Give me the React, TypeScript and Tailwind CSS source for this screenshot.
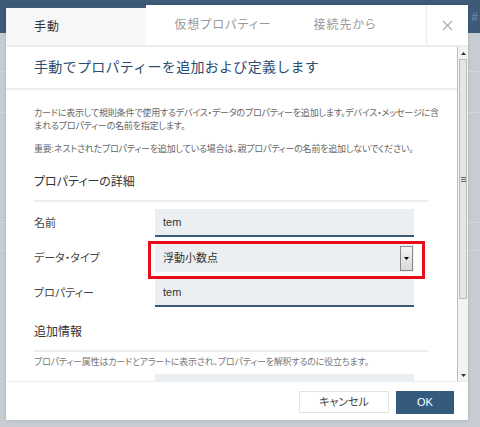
import React from 'react';

const jp = { fontFamily: '"Liberation Sans", "Noto Sans CJK JP", sans-serif' };

const Field: React.FC<{ label: string; value: string }> = ({ label, value }) => (
  <div className="flex items-center h-[28px]">
    <div className="w-[121px] text-[11px] text-[#444] [font-feature-settings:'palt']">{label}</div>
    <div className="w-[259px] h-[28px] bg-[#eceff1] border-b-2 border-[#3a5a7a] flex items-center pl-[8px] text-[11px] text-[#333]">
      {value}
    </div>
  </div>
);

const App: React.FC = () => {
  return (
    <div className="relative w-[480px] h-[427px] overflow-hidden bg-[#c6ccd1]" style={jp}>
      {/* page behind the dialog */}
      <div className="h-[33px] bg-[#3d5a78] flex justify-end items-center pr-[2px] text-[12px] text-[#7d94ab]">#</div>
      <div className="h-[39px] border-b border-[#d3d8dc]"></div>
      <div className="h-[41px] border-b border-[#d3d8dc]"></div>
      <div className="h-[110px] border-b border-[#d3d8dc]"></div>
      <div className="h-[28px] border-b border-[#d3d8dc]"></div>

      {/* dialog */}
      <div className="absolute left-[6px] top-[5px] w-[462px] h-[415px] bg-white flex flex-col shadow-[0_0_3px_rgba(0,0,0,0.15)]">
        {/* tabs */}
        <div className="h-[42px] flex border-b-2 border-[#ececec] text-[12px] [font-feature-settings:'palt']">
          <div className="w-[140px] border-t-[3px] border-[#3d5a78] bg-[#f7f7f7] flex items-center pl-[28px] text-[#333] tracking-[1px]">手動</div>
          <div className="w-[154px] flex items-center justify-center text-[#999] tracking-[1px]">仮想プロパティー</div>
          <div className="w-[90px] flex items-center justify-center text-[#999] tracking-[1px]">接続先から</div>
          <div className="flex-1"></div>
          <div className="w-[42px] border-l border-[#ececec] flex items-center justify-center">
            <svg width="11" height="11" viewBox="0 0 11 11">
              <path d="M1 1L10 10M10 1L1 10" stroke="#a7b3b3" strokeWidth="1.4" />
            </svg>
          </div>
        </div>

        {/* body */}
        <div className="h-[334px] flex">
          <div className="flex-1 overflow-hidden">
            <div className="h-[43px] border-b-2 border-[#eeeeee] flex items-center px-[28px] text-[14px] text-[#2b4d70] tracking-[0.3px]">
              手動でプロパティーを追加および定義します
            </div>
            <div className="pl-[28px] pr-[29px]">
              <div className="pt-[17px] text-[9px] leading-[13px] text-[#666] whitespace-nowrap [font-feature-settings:'palt'] tracking-[-0.2px]">
                カードに表示して規則条件で使用するデバイス・データのプロパティーを追加します。デバイス・メッセージに含
                <br />
                まれるプロパティーの名前を指定します。
              </div>
              <div className="mt-[10px] text-[9px] leading-[13px] text-[#666] whitespace-nowrap [font-feature-settings:'palt'] tracking-[-0.2px]">
                重要:ネストされたプロパティーを追加している場合は、親プロパティーの名前を追加しないでください。
              </div>
              <div className="mt-[18px] pb-[10px] border-b-2 border-[#eeeeee] text-[12px] leading-[16px] text-[#333] [font-feature-settings:'palt']">
                プロパティーの詳細
              </div>

              <div className="mt-[7px] flex flex-col gap-[7px]">
                <Field label="名前" value="tem" />
                <div className="flex items-center h-[28px]">
                  <div className="w-[121px] text-[11px] text-[#444] [font-feature-settings:'palt']">データ・タイプ</div>
                  <div className="relative w-[259px] h-[28px] bg-[#eceff1] flex items-center pl-[8px] text-[11px] text-[#333]">
                    浮動小数点
                    <div className="absolute right-[1px] top-[2px] w-[13px] h-[25px] border border-[#8a8a8a] bg-gradient-to-b from-[#f4f4f4] to-[#d9d9d9] flex items-center justify-center">
                      <svg width="5" height="3" viewBox="0 0 5 3">
                        <path d="M0 0H5L2.5 3Z" fill="#000" />
                      </svg>
                    </div>
                    <div className="absolute left-[-7px] right-[-11px] top-[-3px] bottom-[-7px] border-[3px] border-[#e60d19]"></div>
                  </div>
                </div>
                <Field label="プロパティー" value="tem" />
              </div>

              <div className="mt-[17px] pb-[10px] border-b-2 border-[#eeeeee] text-[12px] leading-[16px] text-[#333] [font-feature-settings:'palt']">
                追加情報
              </div>
              <div className="mt-[4px] text-[9px] leading-[13px] text-[#777] whitespace-nowrap [font-feature-settings:'palt'] tracking-[-0.2px]">
                プロパティー属性はカードとアラートに表示され、プロパティーを解釈するのに役立ちます。
              </div>
              <div className="mt-[5px] ml-[121px] w-[259px] h-[28px] bg-[#eceff1]"></div>
            </div>
          </div>

          {/* scrollbar */}
          <div className="w-[11px] flex flex-col bg-[#f3f3f3] border-l border-[#bdbdbd]">
            <div className="h-[12px] flex items-center justify-center">
              <svg width="5" height="3" viewBox="0 0 5 3">
                <path d="M0 3H5L2.5 0Z" fill="#333" />
              </svg>
            </div>
            <div className="h-[240px] mx-[1px] bg-[#e6e6e6] border border-[#bcbcbc] flex flex-col items-center justify-center gap-[1px]">
              <div className="w-[5px] h-px bg-[#666]"></div>
              <div className="w-[5px] h-px bg-[#666]"></div>
              <div className="w-[5px] h-px bg-[#666]"></div>
            </div>
            <div className="flex-1"></div>
            <div className="h-[12px] flex items-center justify-center">
              <svg width="5" height="3" viewBox="0 0 5 3">
                <path d="M0 0H5L2.5 3Z" fill="#333" />
              </svg>
            </div>
          </div>
        </div>

        {/* footer */}
        <div className="flex-1 border-t border-[#ececec] flex items-center justify-end gap-[7px] pr-[14px] pt-[2px]">
          <button className="w-[90px] h-[22px] border border-[#e3e3e3] bg-white text-[11px] text-[#444] [font-feature-settings:'palt']">
            キャンセル
          </button>
          <button className="w-[58px] h-[23px] bg-[#345a7e] text-[11px] text-white">OK</button>
        </div>
      </div>
    </div>
  );
};

export default App;
